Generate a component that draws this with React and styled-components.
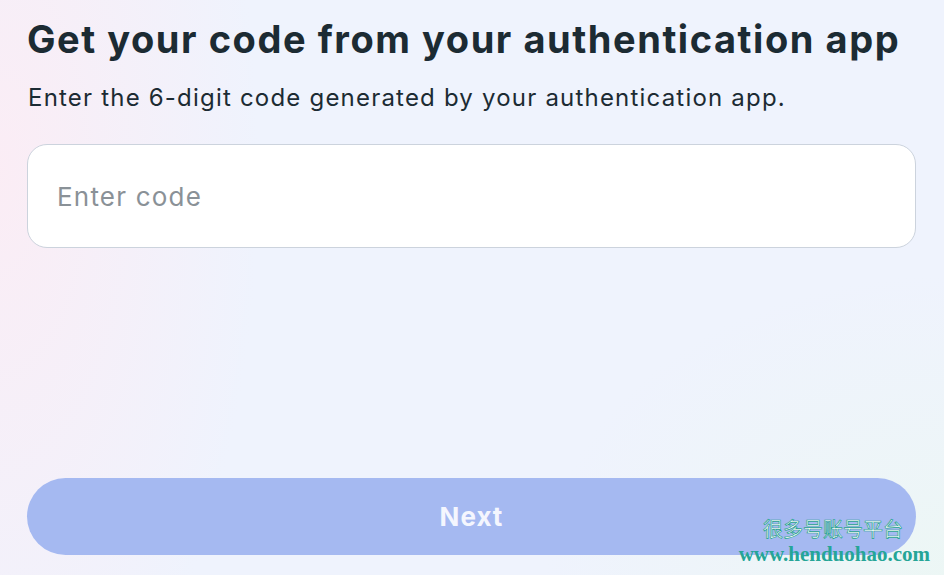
import React from "react";
import styled, { createGlobalStyle } from "styled-components";

const GlobalStyle = createGlobalStyle`
  html, body {
    margin: 0;
    padding: 0;
  }
  body {
    font-family: "Inter", "Noto Sans", sans-serif;
  }
`;

const Page = styled.div`
  position: relative;
  box-sizing: border-box;
  width: 944px;
  height: 575px;
  overflow: hidden;
  padding: 16px 28px 20px 27px;
  display: flex;
  flex-direction: column;
  background:
    radial-gradient(ellipse 260px 600px at 0% 30%, rgba(252, 236, 244, 0.9), rgba(252, 236, 244, 0) 100%),
    radial-gradient(ellipse 400px 300px at 100% 100%, rgba(236, 247, 244, 0.9), rgba(236, 247, 244, 0) 100%),
    #eff3fd;
`;

const Title = styled.h1`
  margin: 0;
  font-size: 38px;
  line-height: 46px;
  font-weight: 700;
  color: #1c2b33;
  letter-spacing: 1.55px;
  white-space: nowrap;
`;

const Subtitle = styled.p`
  margin: 20px 0 0 1px;
  font-size: 24px;
  line-height: 32px;
  font-weight: 400;
  color: #1c2b33;
  letter-spacing: 1.2px;
  white-space: nowrap;
`;

const CodeField = styled.input`
  box-sizing: border-box;
  margin-top: 30px;
  width: 889px;
  height: 104px;
  border: 1px solid #ccd3dd;
  border-radius: 20px;
  background: #ffffff;
  padding: 0 29px;
  font-family: inherit;
  font-size: 26px;
  letter-spacing: 1.2px;
  color: #1c2b33;
  outline: none;

  &::placeholder {
    color: #8a9197;
  }
`;

const Spacer = styled.div`
  flex: 1;
`;

const NextButton = styled.button`
  box-sizing: border-box;
  width: 889px;
  height: 77px;
  border: none;
  border-radius: 39px;
  background: #a5b9f1;
  color: #f4f6fe;
  font-family: inherit;
  font-size: 26px;
  font-weight: 700;
  letter-spacing: 1px;
  cursor: default;
`;

const Watermark = styled.div`
  position: absolute;
  right: 14px;
  bottom: 10px;
  display: flex;
  flex-direction: column;
  align-items: flex-end;
  line-height: 1;
`;

const MarkCn = styled.span`
  margin-right: 27px;
  font-family: "Noto Sans CJK SC", sans-serif;
  font-size: 20px;
  color: #ffffff;
  -webkit-text-stroke: 0.7px #1fa08f;
`;

const MarkUrl = styled.span`
  margin-top: 5px;
  font-family: "Liberation Serif", "DejaVu Serif", serif;
  font-size: 21px;
  font-weight: 700;
  color: #25a597;
`;

export default function App() {
  return (
    <>
      <GlobalStyle />
      <Page>
        <Title>Get your code from your authentication app</Title>
        <Subtitle>Enter the 6-digit code generated by your authentication app.</Subtitle>
        <CodeField type="text" placeholder="Enter code" />
        <Spacer />
        <NextButton type="button">Next</NextButton>
        <Watermark>
          <MarkCn>很多号账号平台</MarkCn>
          <MarkUrl>www.henduohao.com</MarkUrl>
        </Watermark>
      </Page>
    </>
  );
}
